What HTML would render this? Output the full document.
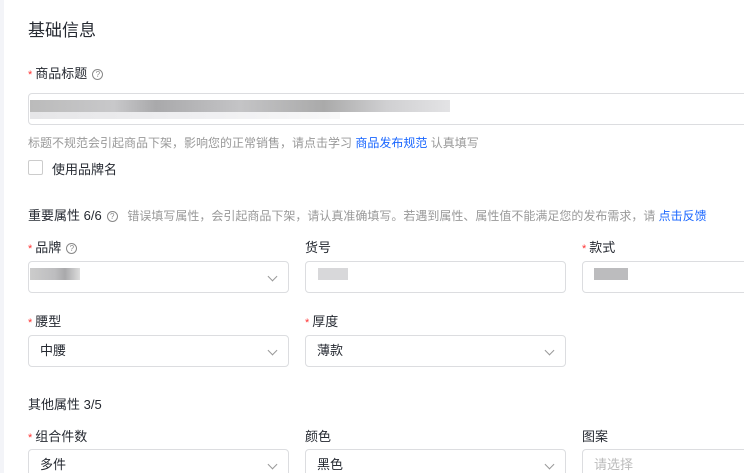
<!DOCTYPE html>
<html><head><meta charset="utf-8"><style>
*{margin:0;padding:0;box-sizing:border-box}
html,body{width:744px;height:473px;overflow:hidden}
body{background:#fff;font-family:"Liberation Sans","Noto Sans CJK SC",sans-serif;color:#252931;position:relative}
.strip{position:absolute;left:0;top:0;width:4px;height:473px;background:#f3f4f8}
.a{position:absolute;white-space:nowrap}
.lbl{font-size:13px;color:#252931}
.st{color:#f33;font-size:11px;margin-right:3px}
.q{display:inline-block;width:11px;height:11px;border:1px solid #888;border-radius:50%;font-size:8px;line-height:9px;text-align:center;color:#888;margin-left:5px;vertical-align:1px}
.box{position:absolute;border:1px solid #dcdde0;border-radius:4px;height:32px;font-size:13px;line-height:30px;padding-left:11px}
.chev{position:absolute;right:12px;top:11px;width:7px;height:7px;border-right:1px solid #999;border-bottom:1px solid #999;transform:rotate(45deg)}
.blk{position:absolute;background:#c2c3c6}
</style></head><body>
<div class="strip"></div>
<div class="a" style="left:28px;top:16px;font-size:17px">基础信息</div>
<div class="a lbl" style="left:28px;top:63px"><span class="st">*</span>商品标题<span class="q">?</span></div>
<div class="box" style="left:28px;top:93px;width:730px"></div>
<div class="blk" style="left:30px;top:100px;width:420px;height:12px;background:linear-gradient(90deg,#bbb,#c8c8ca 20%,#a9a9ab 30%,#c4c4c6 50%,#aaa 70%,#d0d0d2 85%,#e3e3e5)"></div>
<div class="blk" style="left:30px;top:112px;width:310px;height:7px;background:linear-gradient(90deg,#e6e6e8,#f0f0f2 60%,#f8f8f8)"></div>
<div class="a" style="left:28px;top:134px;font-size:12px;color:#999">标题不规范会引起商品下架，影响您的正常销售，请点击学习 <span style="color:#1966ff">商品发布规范</span> 认真填写</div>
<div class="a" style="left:28px;top:160px;width:15px;height:15px;border:1px solid #ccc;border-radius:2px"></div>
<div class="a lbl" style="left:52px;top:159px">使用品牌名</div>
<div class="a" style="left:28px;top:205px;font-size:13px">重要属性 6/6<span class="q">?</span> <span style="color:#999;font-size:12px;margin-left:6px">错误填写属性，会引起商品下架，请认真准确填写。若遇到属性、属性值不能满足您的发布需求，请 <span style="color:#1966ff">点击反馈</span></span></div>

<div class="a lbl" style="left:28px;top:237px"><span class="st">*</span>品牌<span class="q">?</span></div>
<div class="a lbl" style="left:305px;top:237px">货号</div>
<div class="a lbl" style="left:582px;top:237px"><span class="st">*</span>款式</div>
<div class="box" style="left:28px;top:261px;width:261px"><div class="chev"></div></div>
<div class="box" style="left:305px;top:261px;width:261px"></div>
<div class="box" style="left:582px;top:261px;width:170px"></div>
<div class="blk" style="left:30px;top:268px;width:50px;height:12px;background:linear-gradient(90deg,#ccc,#bdbdbf 50%,#a9a9ab 70%,#ddd)"></div>
<div class="blk" style="left:318px;top:268px;width:30px;height:12px;background:#d8d8da"></div>
<div class="blk" style="left:594px;top:268px;width:34px;height:12px;background:#bcbcbe"></div>

<div class="a lbl" style="left:28px;top:311px"><span class="st">*</span>腰型</div>
<div class="a lbl" style="left:305px;top:311px"><span class="st">*</span>厚度</div>
<div class="box" style="left:28px;top:335px;width:261px">中腰<div class="chev"></div></div>
<div class="box" style="left:305px;top:335px;width:261px">薄款<div class="chev"></div></div>

<div class="a" style="left:28px;top:394px;font-size:13px">其他属性 3/5</div>
<div class="a lbl" style="left:28px;top:426px"><span class="st">*</span>组合件数</div>
<div class="a lbl" style="left:305px;top:426px">颜色</div>
<div class="a lbl" style="left:582px;top:426px">图案</div>
<div class="box" style="left:28px;top:449px;width:261px">多件<div class="chev"></div></div>
<div class="box" style="left:305px;top:449px;width:261px">黑色<div class="chev"></div></div>
<div class="box" style="left:582px;top:449px;width:170px;color:#bbb">请选择</div>
</body></html>
